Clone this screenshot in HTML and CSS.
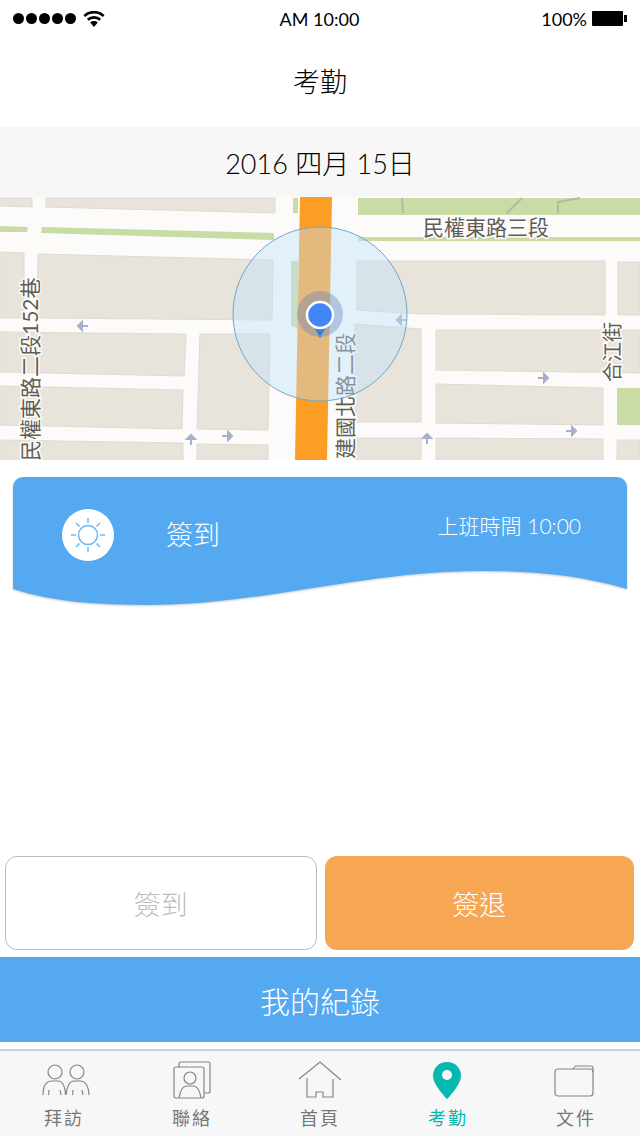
FILE: index.html
```html
<!DOCTYPE html>
<html lang="zh-Hant">
<head>
<meta charset="UTF-8" />
<meta name="viewport" content="width=device-width, initial-scale=1" />
<title>考勤</title>
<link rel="stylesheet" href="styles.css">
</head>
<body>

<div class="status">
  <div class="status-left">
    <span class="dot"></span><span class="dot"></span><span class="dot"></span><span class="dot"></span><span class="dot"></span>
    <svg class="wifi" width="22" height="16" viewBox="0 0 22 16">
      <path d="M11 16 7.2 11.6a5.6 5.6 0 0 1 7.6 0Z" />
      <path d="M5.6 9.8a8 8 0 0 1 10.8 0l1.7-2a10.7 10.7 0 0 0-14.2 0Z" />
      <path d="M2.2 6a13 13 0 0 1 17.6 0L21.6 3.9a15.8 15.8 0 0 0-21.2 0Z" />
    </svg>
  </div>
  <div class="status-time">AM 10:00</div>
  <div class="status-right">
    <span>100%</span>
    <span class="battery"></span>
  </div>
</div>

<header class="title">考勤</header>
<div class="date">2016 四月 15日</div>

<svg class="map" width="640" height="263" viewBox="0 197 640 263">
  <rect x="0" y="197" width="640" height="263" fill="#fcfbf9" />

  <g class="green">
    <polygon points="358,198 640,198 640,215 358,215" />
    <polygon points="358,237 640,237 640,241 358,241" />
    <polygon points="0,226 28,227 27,232 0,232" />
    <polygon points="42,227 274,233 274,240 41,233" />
    <polygon points="293,198 298,198 298,213 293,213" />
    <polygon points="291,261 298,261 298,328 291,326" />
    <polygon points="617,388 640,388 640,425 617,425" />
  </g>
  <g class="trail">
    <path d="M402 198 403 213M507 213 522 198M558 213V202L580 198" />
  </g>

  <g class="block">
    <polygon points="0,198 32,198 32,207 0,206" />
    <polygon points="46,198 275,198 275,213 46,207" />
    <polygon points="0,252 24,253 24,318 0,318" />
    <polygon points="38,254 273,260 272,320 37,318" />
    <polygon points="0,332 186,334 184,376 0,372" />
    <polygon points="0,386 183,390 182,429 0,425" />
    <polygon points="0,440 183,443 183,460 0,460" />
    <polygon points="200,334 270,334 268,430 197,429" />
    <polygon points="197,444 268,445 268,460 197,460" />
    <polygon points="357,261 605,261 605,315 420,314 357,310" />
    <polygon points="618,262 640,262 640,315 618,315" />
    <polygon points="355,324 421,329 421,422 355,422" />
    <polygon points="436,330 640,330 640,373 436,370" />
    <polygon points="436,384 603,388 603,425 436,423" />
    <polygon points="436,438 603,439 603,460 436,460" />
    <polygon points="617,440 640,440 640,460 617,460" />
    <polygon points="355,438 421,438 421,460 355,460" />
  </g>

  <polygon class="road" points="300,197 332,197 327,460 295,460" />

  <g class="arrow">
    <path d="M88 326H78M78 326 82 322V330Z" />
    <path d="M407 320H397M397 320 401 316V324Z" />
    <path d="M191 445V435M191 435 187 439H195Z" />
    <path d="M222 436H232M232 436 228 432V440Z" />
    <path d="M538 378H548M548 378 544 374V382Z" />
    <path d="M566 431H576M576 431 572 427V435Z" />
    <path d="M427 444V434M427 434 423 438H431Z" />
  </g>

  <text class="map-label" x="423" y="235">民權東路三段</text>
  <text class="map-label" transform="translate(38 461) rotate(-90)">民權東路二段152巷</text>
  <text class="map-label" transform="translate(353 459) rotate(-90)">建國北路二段</text>
  <text class="map-label map-label-small" transform="translate(620 382) rotate(-90)">合江街</text>

  <circle class="range" cx="320" cy="314" r="87" />
  <circle class="halo" cx="320" cy="314" r="23" />
  <polygon class="pointer" points="314,327 326,327 320,338" />
  <circle class="spot" cx="320" cy="315" r="13" />
</svg>

<section class="card">
  <svg class="card-bg" width="614" height="135" viewBox="0 0 614 135">
    <path d="M0 113V11A10 10 0 0 1 10 1H604A10 10 0 0 1 614 11V113C570 100 525 95 469 95C350 95 250 129 134 129C85 129 40 126 0 113Z" />
  </svg>
  <div class="card-icon">
    <svg width="38" height="38" viewBox="0 0 38 38">
      <circle cx="19" cy="19" r="9.5" />
      <path d="M19 2V7M19 31V36M2 19H7M31 19H36M7 7 10.5 10.5M31 7 27.500 10.500M7 31 10.500 27.500M31 31 27.500 27.500" />
    </svg>
  </div>
  <div class="card-label">簽到</div>
  <div class="card-time">上班時間 10:00</div>
</section>

<div class="actions">
  <div class="btn btn-off">簽到</div>
  <div class="btn btn-out">簽退</div>
</div>
<div class="record">我的紀錄</div>

<nav class="tabs">
  <a class="tab">
    <svg width="48" height="40" viewBox="0 0 48 40">
      <circle cx="15" cy="11" r="7" />
      <circle cx="37" cy="11" r="7" />
      <path d="M3 34C3 25 6 20 12 20H18C22 20 25 25 25.500 34M26 34C27 25 29 20 34 20H40C46 20 48.500 25 49 34M9 29 8.500 34M20 29 21 34M33 29 32.500 34M42 29 43 34" />
    </svg>
    <span>拜訪</span>
  </a>
  <a class="tab">
    <svg width="48" height="40" viewBox="0 0 48 40">
      <path d="M11 6V3A2 2 0 0 1 13 1H40A2 2 0 0 1 42 3V30A2 2 0 0 1 40 32H36" />
      <rect x="6" y="6" width="30" height="31" rx="2" />
      <circle cx="22" cy="17" r="6" />
      <path d="M11 37C12 30 14 26 18 25H26C30 26 32 30 33 37" />
    </svg>
    <span>聯絡</span>
  </a>
  <a class="tab">
    <svg width="48" height="40" viewBox="0 0 48 40">
      <path d="M3 18 24 1 45 19" />
      <path d="M11 17V36H20V31H27V36H37V18" />
    </svg>
    <span>首頁</span>
  </a>
  <a class="tab tab-active">
    <svg width="48" height="40" viewBox="0 0 48 40">
      <path class="pin" d="M23 1C15 1 9 7 9 15C9 24 23 38 23 38C23 38 37 24 37 15C37 7 31 1 23 1Z" />
      <circle class="pin-hole" cx="23" cy="14" r="5" />
    </svg>
    <span>考勤</span>
  </a>
  <a class="tab">
    <svg width="48" height="40" viewBox="0 0 48 40">
      <rect x="3" y="8" width="38" height="27" rx="3" />
      <path d="M21 8 23 5.500A1 1 0 0 1 24 5H39A2 2 0 0 1 41 7V11" />
    </svg>
    <span>文件</span>
  </a>
</nav>

</body>
</html>
```

FILE: styles.css
```css
* {
  box-sizing: border-box;
}
html, body {
  margin: 0;
  padding: 0;
}
body {
  width: 640px;
  height: 1136px;
  display: flex;
  flex-direction: column;
  background: #fff;
  color: #000;
  font-family: Lato, "Noto Sans CJK TC", sans-serif;
  font-weight: 300;
  overflow: hidden;
}

/* status bar */
.status {
  height: 37px;
  display: grid;
  grid-template-columns: 1fr auto 1fr;
  align-items: center;
  padding: 0 14px 0 13px;
  font-size: 18px;
  font-weight: 400;
}
.status-left {
  display: flex;
  align-items: center;
  gap: 2px;
}
.dot {
  width: 11px;
  height: 11px;
  border-radius: 50%;
  background: #000;
}
.wifi {
  margin-left: 5px;
  fill: #000;
}
.status-right {
  display: flex;
  align-items: center;
  justify-content: flex-end;
  gap: 5px;
}
.battery {
  position: relative;
  width: 31px;
  height: 15px;
  background: #000;
  border-radius: 1px;
  margin-right: 3px;
}
.battery::after {
  content: "";
  position: absolute;
  right: -4px;
  top: 4px;
  width: 3px;
  height: 7px;
  background: #000;
}

.title {
  height: 90px;
  padding-bottom: 3px;
  display: flex;
  align-items: center;
  justify-content: center;
  font-size: 27px;
}
.date {
  height: 70px;
  display: flex;
  align-items: center;
  justify-content: center;
  background: #f7f7f7;
  font-size: 27px;
}

/* map */
.map {
  display: block;
  flex: none;
}
.block polygon {
  fill: #e8e4dc;
  stroke: #dfdbd1;
  stroke-width: 1;
}
.green polygon {
  fill: #c9dca6;
}
.trail path {
  fill: none;
  stroke: #b4b8a4;
  stroke-width: 2;
}
.road {
  fill: #fd9e24;
}
.arrow path {
  fill: #a9aecb;
  stroke: #a9aecb;
  stroke-width: 2;
}
.map-label {
  font-size: 21px;
  font-weight: 400;
  fill: #5f5d55;
  stroke: #fcfbf9;
  stroke-width: 3px;
  paint-order: stroke;
}
.map-label-small {
  font-size: 20px;
}
.range {
  fill: rgba(190, 225, 250, 0.42);
  stroke: #6fa8cc;
  stroke-width: 1;
}
.halo {
  fill: rgba(100, 130, 190, 0.38);
}
.pointer {
  fill: #3f7fdc;
}
.spot {
  fill: #4285f4;
  stroke: #fff;
  stroke-width: 2.500;
}

/* wave card */
.card {
  position: relative;
  height: 135px;
  margin: 16px 13px 0;
  padding: 33px 46px 0 49px;
  display: flex;
  color: #fff;
}
.card-bg {
  position: absolute;
  left: 0;
  top: 0;
  filter: drop-shadow(0 1px 1px rgba(0, 0, 0, 0.2));
}
.card-bg path {
  fill: #55a9f1;
}
.card-icon {
  position: relative;
  width: 52px;
  height: 52px;
  border-radius: 50%;
  background: #fff;
  display: flex;
  align-items: center;
  justify-content: center;
}
.card-icon svg {
  fill: none;
  stroke: #6cb6f3;
  stroke-width: 1.500;
}
.card-label {
  position: relative;
  margin-left: 52px;
  font-size: 27px;
  line-height: 52px;
}
.card-time {
  position: relative;
  margin-left: auto;
  font-size: 21px;
  line-height: 34px;
}

/* buttons */
.actions {
  margin-top: auto;
  padding: 0 6px 0 5px;
  display: flex;
  gap: 8px;
}
.btn {
  flex: 1;
  height: 94px;
  border-radius: 12px;
  display: flex;
  align-items: center;
  justify-content: center;
  font-size: 27px;
}
.btn-off {
  background: #fff;
  border: 1px solid #bbb;
  color: #bdbdbd;
}
.btn-out {
  background: #f7a654;
  color: #fff;
}
.record {
  height: 85px;
  margin-top: 7px;
  background: #55a9f1;
  color: #fff;
  display: flex;
  align-items: center;
  justify-content: center;
  font-size: 30px;
}

/* tab bar */
.tabs {
  height: 87px;
  margin-top: 7px;
  display: grid;
  grid-template-columns: repeat(5, 1fr);
  background: #f7f7f7;
  border-top: 2px solid #cfcfcf;
}
.tab {
  padding-top: 10px;
  display: flex;
  flex-direction: column;
  align-items: center;
  color: #777;
  font-size: 18px;
  font-weight: 400;
  letter-spacing: 2px;
}
.tab svg {
  display: block;
  fill: none;
  stroke: #858585;
  stroke-width: 1.200;
  overflow: visible;
}
.tab span {
  line-height: 26px;
  margin-top: 4px;
}
.tab-active {
  color: #05b8b0;
}
.tab svg .pin {
  fill: #05b8b0;
  stroke: none;
}
.tab svg .pin-hole {
  fill: #f7f7f7;
  stroke: none;
}
```
